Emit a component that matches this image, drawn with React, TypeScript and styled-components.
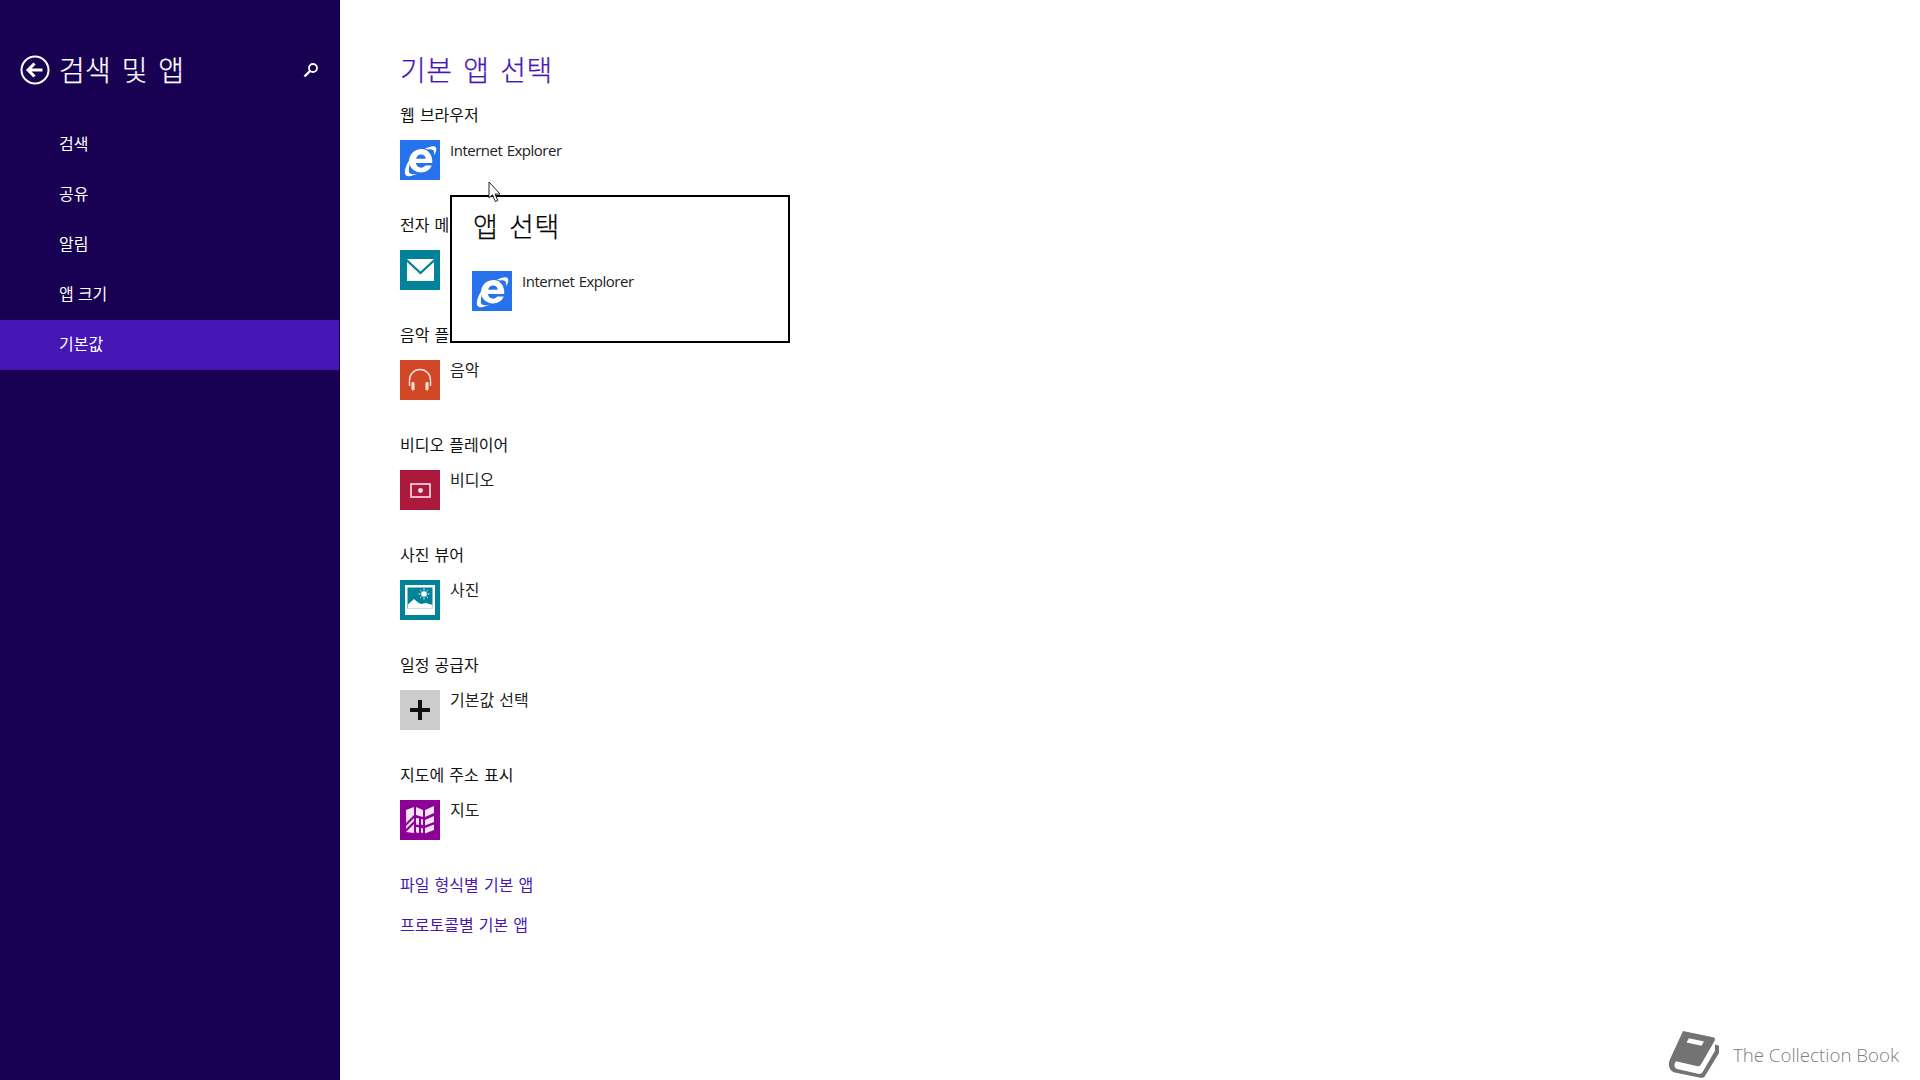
import React from 'react'
import styled, { createGlobalStyle } from 'styled-components'

const FONT = `"Open Sans", "Noto Sans CJK KR", sans-serif`

const GlobalStyle = createGlobalStyle`
  html, body {
    margin: 0;
    height: 100%;
    background: #fff;
  }
  body {
    font-family: ${FONT};
    overflow: hidden;
  }
`

const Page = styled.div`
  position: relative;
  display: flex;
  width: 1920px;
  height: 1080px;
  background: #fff;
  overflow: hidden;
`

const Sidebar = styled.nav`
  width: 340px;
  flex-shrink: 0;
  background: #180052;
  color: #fff;
`

const SideHeader = styled.div`
  display: flex;
  align-items: center;
  height: 40px;
  padding: 50px 21px 30px 20px;
`

const BackButton = styled.svg`
  width: 30px;
  height: 30px;
  flex-shrink: 0;
  margin-right: 9px;
`

const SideTitle = styled.h2`
  flex: 1;
  margin: 0;
  font-size: 28px;
  font-weight: 300;
  letter-spacing: 0.3px;
  word-spacing: 3px;
  line-height: 40px;
  white-space: nowrap;
  -webkit-text-stroke: 0.25px currentColor;
`

const SearchGlyph = styled.svg`
  width: 16px;
  height: 16px;
  flex-shrink: 0;
`

const SideList = styled.ul`
  list-style: none;
  margin: 0;
  padding: 0;
`

const SideItem = styled.li<{ $active?: boolean }>`
  height: 50px;
  line-height: 49px;
  padding-left: 59px;
  margin-right: 1px;
  font-size: 16px;
  background: ${({ $active }) => ($active ? '#4617b4' : 'transparent')};
`

const Main = styled.main`
  flex: 1;
  padding: 47px 0 0 400px;
  margin-left: -340px;
  min-width: 0;
`

const Heading = styled.h1`
  margin: 0 0 9px;
  font-size: 28px;
  font-weight: 300;
  line-height: 46px;
  letter-spacing: 0.5px;
  word-spacing: 3px;
  color: #4617b4;
  white-space: nowrap;
  -webkit-text-stroke: 0.25px currentColor;
`

const Section = styled.section`
  height: 110px;
`

const SectionLabel = styled.div`
  height: 24px;
  margin-bottom: 14px;
  font-size: 16px;
  line-height: 26px;
  word-spacing: 1px;
  color: #111;
  white-space: nowrap;
`

const AppRow = styled.div`
  display: flex;
  gap: 10px;
`

const AppTile = styled.div<{ $bg: string }>`
  display: flex;
  align-items: center;
  justify-content: center;
  width: 40px;
  height: 40px;
  flex-shrink: 0;
  background: ${({ $bg }) => $bg};
`

const AppName = styled.div<{ $latin?: boolean }>`
  margin-top: -2px;
  font-size: ${({ $latin }) => ($latin ? '15px' : '16px')};
  letter-spacing: ${({ $latin }) => ($latin ? '-0.5px' : '0')};
  word-spacing: 1px;
  line-height: 24px;
  color: #222;
  white-space: nowrap;
`

const LinkList = styled.div`
  display: flex;
  flex-direction: column;
  gap: 16px;
`

const PlainLink = styled.a`
  height: 24px;
  font-size: 16px;
  line-height: 26px;
  word-spacing: 1px;
  color: #4617b4;
  text-decoration: none;
  white-space: nowrap;
`

const Flyout = styled.div`
  position: absolute;
  left: 450px;
  top: 195px;
  box-sizing: border-box;
  width: 340px;
  height: 148px;
  padding: 10px 20px 7px;
  background: #fff;
  border: 2px solid #000;
`

const FlyoutTitle = styled.div`
  margin-bottom: 24px;
  padding-left: 1px;
  font-size: 27px;
  font-weight: 300;
  line-height: 40px;
  letter-spacing: 0.6px;
  word-spacing: 3px;
  color: #000;
  white-space: nowrap;
  -webkit-text-stroke: 0.25px currentColor;
`

const Pointer = styled.svg`
  position: absolute;
  left: 488px;
  top: 181px;
  width: 14px;
  height: 22px;
`

const Watermark = styled.div`
  position: absolute;
  right: 21px;
  bottom: -4px;
  display: flex;
  align-items: center;
  gap: 13px;
  height: 60px;
  font-size: 18.700px;
  font-weight: 300;
  color: #808080;
`

const BookGlyph = styled.svg`
  width: 52px;
  height: 48px;
`

const IeIcon = () => (
  <svg width="37" height="37" viewBox="0 0 34 34">
    <path
      d="M18 6.500c-6.500 0-11.500 5-11.500 11 0 6 4.700 10.500 11 10.500 4.700 0 8.300-2.300 9.800-6.300h-6c-.9 1.300-2.200 1.900-3.800 1.900-2.600 0-4.500-1.700-4.700-4.200h15c.6-7-3.500-12.900-9.800-12.900zm-5 8.800c.4-2.200 2.200-3.700 4.500-3.700 2.300 0 4.100 1.500 4.400 3.700z"
      fill="#fff"
    />
    <path
      d="M21 6.300c3.900-2 8.600-3.200 10-1.500 1.300 1.600.2 4.700-1.700 7.500.3-2.300.3-4.200-.8-5-1.100-.8-3-.7-4.700-.3zM9 13C4.500 19 1.200 27 3.200 30c1.900 2.600 7 1.200 11-1-3 .7-6.300 1-7.400-.7-1.200-2 .2-9.600 2.200-15.300z"
      fill="#fff"
    />
  </svg>
)

const MailIcon = () => (
  <svg width="27" height="22" viewBox="0 0 27 22">
    <path d="M0 0h27L13.500 12.500z" fill="#fff" />
    <path d="M0 3v19h27V3L13.500 15.500z" fill="#fff" />
  </svg>
)

const HeadphonesIcon = () => (
  <svg width="24" height="24" viewBox="0 0 24 24">
    <path d="M1.500 18V12a10.500 10.500 0 0 1 21 0v6" fill="none" stroke="#fde6dc" strokeWidth="1.400" />
    <rect x="3.500" y="14" width="3" height="8.500" rx="1.400" fill="#fde6dc" />
    <rect x="17.500" y="14" width="3" height="8.500" rx="1.400" fill="#fde6dc" />
  </svg>
)

const VideoIcon = () => (
  <svg width="21" height="15" viewBox="0 0 21 15">
    <rect x="1" y="1" width="19" height="13" fill="none" stroke="#fbe3ea" strokeWidth="1.600" />
    <circle cx="10.500" cy="7.500" r="2.400" fill="#fbe3ea" />
  </svg>
)

const PhotoIcon = () => (
  <svg width="30" height="30" viewBox="0 0 30 30">
    <path fillRule="evenodd" d="M0 0h30v30H0zM2.500 2.500v21h25v-21z" fill="#fff" />
    <circle cx="19" cy="9" r="2.800" fill="#fff" />
    <path d="M19 3.500v2M19 12.500v2M13.500 9h2M22.500 9h2M15.200 5.200l1.300 1.300M21.500 11.500l1.300 1.300M22.800 5.200l-1.300 1.300M16.500 11.500l-1.300 1.300" stroke="#fff" strokeWidth="0.900" />
    <path d="M3 23.500v-4l6-5.500 4 3.500 3 1.500 5-1 6.500 2v3.500z" fill="#fff" />
  </svg>
)

const PlusIcon = () => (
  <svg width="20" height="20" viewBox="0 0 20 20">
    <path d="M8 0h4v8h8v4h-8v8H8v-8H0V8h8z" fill="#111" />
  </svg>
)

const MapIcon = () => (
  <svg width="32" height="32" viewBox="0 0 32 32">
    <path
      d="M2 6l8-3v8L2 19zM12 3l7 3v7l-7-2zM21 6l9-4v7l-9 4zM2 22l8-8v3l-8 8zM2 28l8-8v9l-8-1zM12 14l3 .6V21l-3-.5zM17 15l2 .5V21l-2-.4zM21 16l9-4v6l-9 3.500zM12 23l3 .5V29l-3-.6zM17 24l2 .4V29l-2-.4zM21 24l9-3.500V26l-9 3.500z"
      fill="#f5e3f7"
    />
  </svg>
)

const apps = [
  { label: '웹 브라우저', name: 'Internet Explorer', latin: true, bg: '#2672ec', icon: <IeIcon /> },
  { label: '전자 메일', name: '메일', bg: '#008299', icon: <MailIcon /> },
  { label: '음악 플레이어', name: '음악', bg: '#d24726', icon: <HeadphonesIcon /> },
  { label: '비디오 플레이어', name: '비디오', bg: '#ac193d', icon: <VideoIcon /> },
  { label: '사진 뷰어', name: '사진', bg: '#008299', icon: <PhotoIcon /> },
  { label: '일정 공급자', name: '기본값 선택', bg: '#cccccc', icon: <PlusIcon /> },
  { label: '지도에 주소 표시', name: '지도', bg: '#8c0095', icon: <MapIcon /> },
]

const sideItems = ['검색', '공유', '알림', '앱 크기', '기본값']

export default function App() {
  return (
    <Page>
      <GlobalStyle />
      <Sidebar>
        <SideHeader>
          <BackButton viewBox="0 0 30 30">
            <circle cx="15" cy="15" r="13.500" fill="none" stroke="#fff" strokeWidth="2" />
            <path d="M22.500 15H9M14.500 8.500L8 15l6.500 6.500" fill="none" stroke="#fff" strokeWidth="3" />
          </BackButton>
          <SideTitle>검색 및 앱</SideTitle>
          <SearchGlyph viewBox="0 0 16 16">
            <circle cx="10" cy="6" r="4" fill="none" stroke="#fff" strokeWidth="1.800" />
            <path d="M7 9l-5.500 5.500" stroke="#fff" strokeWidth="2.400" />
          </SearchGlyph>
        </SideHeader>
        <SideList>
          {sideItems.map((item) => (
            <SideItem key={item} $active={item === '기본값'}>
              {item}
            </SideItem>
          ))}
        </SideList>
      </Sidebar>

      <Main>
        <Heading>기본 앱 선택</Heading>
        {apps.map((app) => (
          <Section key={app.label}>
            <SectionLabel>{app.label}</SectionLabel>
            <AppRow>
              <AppTile $bg={app.bg}>{app.icon}</AppTile>
              <AppName $latin={app.latin}>{app.name}</AppName>
            </AppRow>
          </Section>
        ))}
        <LinkList>
          <PlainLink>파일 형식별 기본 앱</PlainLink>
          <PlainLink>프로토콜별 기본 앱</PlainLink>
        </LinkList>
      </Main>

      <Flyout>
        <FlyoutTitle>앱 선택</FlyoutTitle>
        <AppRow>
          <AppTile $bg="#2672ec">
            <IeIcon />
          </AppTile>
          <AppName $latin>Internet Explorer</AppName>
        </AppRow>
      </Flyout>

      <Pointer viewBox="0 0 14 22">
        <path d="M1 1v16l3.500-3.200 2.800 6.700 2.500-1-2.800-6.500H12z" fill="#fff" stroke="#222" strokeWidth="1" />
      </Pointer>

      <Watermark>
        <BookGlyph viewBox="0 0 52 46" preserveAspectRatio="none">
          <path
            d="M15 1l30 6c2 .4 2.500 2 1.500 3.500L33 33c-1 1.500-2.500 2-4.500 1.500L8 30c-3 4-1 7 2 7.700L30 42c2 .4 3.500 0 4.500-1.500L47 20V14l4 1v7L37 44c-1.500 2-3.500 2-6 1.500L8 41C2 40-1 34 2 28z"
            fill="#737373"
          />
          <path d="M21 8l15 3-2.500 4-15-3z" fill="#fff" />
        </BookGlyph>
        The Collection Book
      </Watermark>
    </Page>
  )
}
